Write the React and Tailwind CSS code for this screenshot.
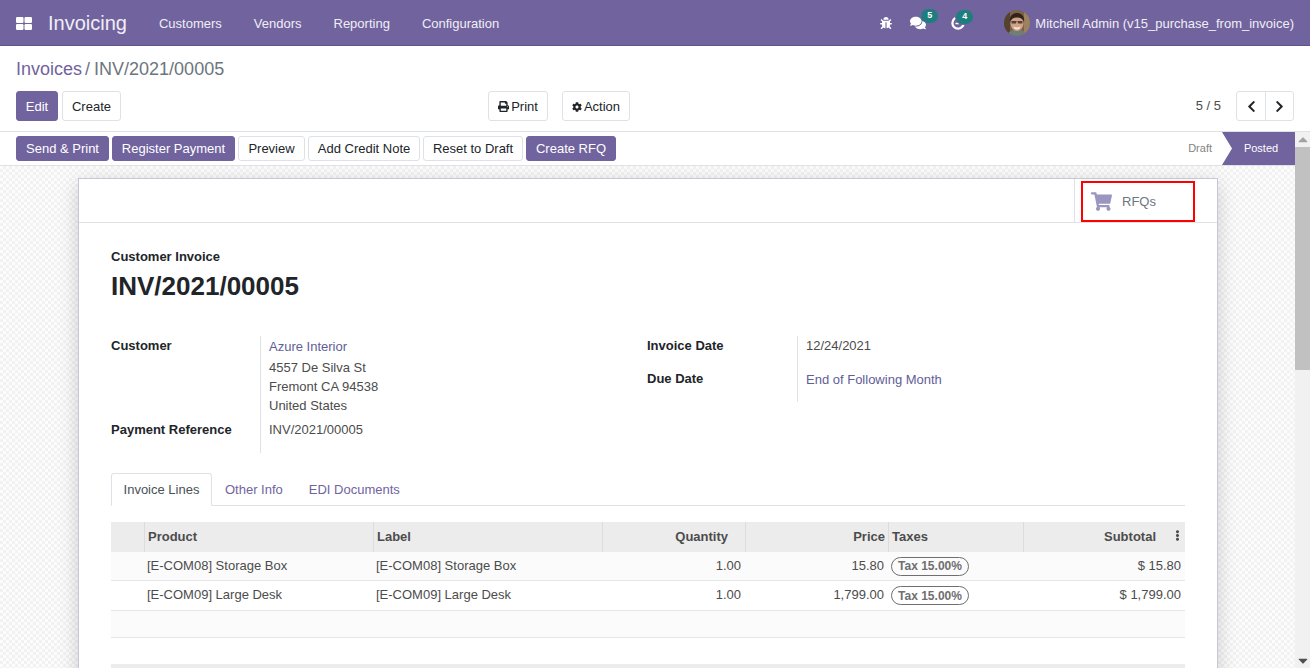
import { FaBug, FaCaretDown, FaCaretUp, FaChevronLeft, FaChevronRight, FaCog, FaComments, FaEllipsisV, FaPrint, FaShoppingCart } from 'react-icons/fa';

const purple = 'bg-[#71639e] border-[#71639e] text-white';
const plain = 'bg-white border-[#dee2e6] text-[#212529]';

function Btn({ primary, className = '', children }) {
  return (
    <button
      type="button"
      className={`inline-flex items-center justify-center rounded-[3px] border text-[13px] ${primary ? purple : plain} ${className}`}
    >
      {children}
    </button>
  );
}

function Badge({ className = '', children }) {
  return (
    <span className={`absolute -top-[6px] flex h-[14px] w-[17px] items-center justify-center rounded-full bg-[#1f7d80] text-[9px] font-bold text-white ${className}`}>
      {children}
    </span>
  );
}

function AppsIcon() {
  return (
    <svg viewBox="0 0 16 13" className="h-[13px] w-[16px] fill-white">
      <rect x="0" y="0" width="7.500" height="6" rx="1.200" />
      <rect x="8.500" y="0" width="7.500" height="6" rx="1.200" />
      <rect x="0" y="7" width="7.500" height="6" rx="1.200" />
      <rect x="8.500" y="7" width="7.500" height="6" rx="1.200" />
    </svg>
  );
}

function ClockIcon() {
  return (
    <svg viewBox="0 0 14 14" className="h-[14px] w-[14px] fill-none stroke-white">
      <circle cx="7" cy="7" r="5.600" strokeWidth="2.300" />
      <path d="M7.500 4v3.500H4.500" strokeWidth="1.300" />
    </svg>
  );
}

function Avatar() {
  return (
    <svg viewBox="0 0 26 26" className="h-[26px] w-[26px] rounded-full">
      <rect width="26" height="26" fill="#7d6247" />
      <rect x="0" y="0" width="6" height="26" fill="#54412f" />
      <rect x="20" y="0" width="6" height="26" fill="#9c8260" />
      <path d="M3 26c1-5 5-6 10-6s9 1 10 6z" fill="#6f7f78" />
      <ellipse cx="13" cy="13.500" rx="6.500" ry="7.500" fill="#d2a084" />
      <path d="M6 12c-1-6 3-9 7-9s8 3 7 9c-1-3-3-4.500-7-4.500s-6 1.500-7 4.500z" fill="#2f241d" />
      <path d="M7.500 11h4.500v2.500h-4.500zM14 11h4.500v2.500h-4.500zM12 11.500h2v.7h-2z" fill="#3a3230" opacity="0.85" />
      <path d="M9.500 16.500c2 1.300 5 1.300 7 0-.5 2.300-1.800 3-3.500 3s-3-.7-3.500-3z" fill="#f4ebe2" />
    </svg>
  );
}

const navLinks = ['Customers', 'Vendors', 'Reporting', 'Configuration'];

function Navbar() {
  return (
    <header className="flex h-[46px] shrink-0 items-center border-b border-[#5f5387] bg-[#71639e] text-[#f0eef5]">
      <span className="ml-[16px] flex pt-[1px]">
        <AppsIcon />
      </span>
      <span className="ml-[16px] text-[20px] text-[#f0eef5]">Invoicing</span>
      <nav className="ml-[32px] flex gap-[32px] pt-[2px] text-[13px]">
        {navLinks.map((l) => (
          <a key={l}>{l}</a>
        ))}
      </nav>
      <div className="ml-auto flex items-center">
        <FaBug className="text-[12px] text-white" />
        <span className="relative ml-[18px] flex">
          <FaComments className="text-[16px] text-white" />
          <Badge className="-right-[12px]">5</Badge>
        </span>
        <span className="relative ml-[25px] flex">
          <ClockIcon />
          <Badge className="-right-[8px] ring-1 ring-[#71639e]">4</Badge>
        </span>
        <span className="ml-[39px] flex items-center">
          <Avatar />
        </span>
        <span className="ml-[5px] mr-[16px] pt-[2px] text-[13px]">Mitchell Admin (v15_purchase_from_invoice)</span>
      </div>
    </header>
  );
}

function ControlPanel() {
  return (
    <div className="h-[86px] shrink-0 border-b border-[#dee2e6] bg-white px-[16px]">
      <div className="flex h-[45px] items-center pt-[1px] text-[18px] text-[#71639e]">
        Invoices
        <span className="ml-[3px] text-[#6c757d]">/</span>
        <span className="ml-[4px] text-[#6c757d]">INV/2021/00005</span>
      </div>
      <div className="relative flex items-center">
        <Btn primary className="h-[30px] w-[42px] pt-[1px]">Edit</Btn>
        <Btn className="ml-[4px] h-[30px] w-[59px] pt-[1px]">Create</Btn>
        <Btn className="ml-[367px] h-[30px] w-[60px] gap-[2px] pt-[1px]">
          <FaPrint className="text-[11px]" /> Print
        </Btn>
        <Btn className="ml-[14px] h-[30px] w-[68px] gap-[2px] pt-[1px]">
          <FaCog className="text-[10px]" /> Action
        </Btn>
        <span className="ml-auto text-[13px] text-[#4c4c4c]">5 / 5</span>
        <div className="ml-[15px] flex h-[30px] rounded-[3px] border border-[#dee2e6]">
          <span className="flex w-[29px] items-center justify-center border-r border-[#dee2e6] text-[13px] text-[#212529]">
            <FaChevronLeft />
          </span>
          <span className="flex w-[27px] items-center justify-center text-[13px] text-[#212529]">
            <FaChevronRight />
          </span>
        </div>
      </div>
    </div>
  );
}

function StatusBar() {
  return (
    <div className="flex h-[34px] shrink-0 items-center border-b border-[#dee2e6] bg-white pl-[16px]">
      <div className="flex gap-[3px]">
        <Btn primary className="h-[25px] w-[93px]">Send &amp; Print</Btn>
        <Btn primary className="h-[25px] w-[123px]">Register Payment</Btn>
        <Btn className="h-[25px] w-[67px]">Preview</Btn>
        <Btn className="h-[25px] w-[112px]">Add Credit Note</Btn>
        <Btn className="h-[25px] w-[100px]">Reset to Draft</Btn>
        <Btn primary className="h-[25px] w-[90px]">Create RFQ</Btn>
      </div>
      <div className="ml-auto flex h-[33px] items-center">
        <span className="mr-[10px] text-[11px] text-[#7f8580]">Draft</span>
        <span className="flex h-[33px] w-[73px] items-center justify-center bg-[#71639e] pl-[5px] text-[11px] text-white [clip-path:polygon(0_0,100%_0,100%_100%,0_100%,10px_50%)]">
          Posted
        </span>
      </div>
    </div>
  );
}

function Field({ label, labelClass = 'w-[149px]', children }) {
  return (
    <div className="flex">
      <div className={`shrink-0 text-[13px] font-bold leading-[20px] text-[#212529] ${labelClass}`}>{label}</div>
      <div className="flex-1 border-l border-[#dee2e6] pl-[8px] text-[13px] text-[#4c4c4c]">{children}</div>
    </div>
  );
}

function FormHeader() {
  return (
    <div className="grid grid-cols-2">
      <div>
        <Field label="Customer">
          <div className="pt-[1px] leading-[19px]">
            <div className="mb-[2px] text-[#5f5e97]">Azure Interior</div>
            <div>4557 De Silva St</div>
            <div>Fremont CA 94538</div>
            <div>United States</div>
          </div>
        </Field>
        <Field label="Payment Reference" labelClass="w-[149px] pt-[5px]">
          <div className="h-[38px] pt-[5px] leading-[20px]">INV/2021/00005</div>
        </Field>
      </div>
      <div className="-ml-[1px]">
        <Field label="Invoice Date" labelClass="w-[150px]">
          <div className="h-[33px] leading-[20px]">12/24/2021</div>
        </Field>
        <Field label="Due Date" labelClass="w-[150px]">
          <div className="h-[33px] pt-[1px] leading-[20px] text-[#5f5e97]">End of Following Month</div>
        </Field>
      </div>
    </div>
  );
}

function Tabs() {
  return (
    <div className="mt-[20px] flex h-[33px] border-b border-[#dee2e6] text-[13px]">
      <span className="flex h-[33px] w-[101px] items-center justify-center rounded-t-[3px] border border-b-white border-[#dee2e6] bg-white text-[#495057]">
        Invoice Lines
      </span>
      <span className="ml-[13px] flex items-center pt-[1px] text-[#71639e]">Other Info</span>
      <span className="ml-[26px] flex items-center pt-[1px] text-[#71639e]">EDI Documents</span>
    </div>
  );
}

const lines = [
  { name: '[E-COM08] Storage Box', qty: '1.00', price: '15.80', total: '$ 15.80', rowClass: 'h-[29px] bg-[#fbfbfb]', textClass: '' },
  { name: '[E-COM09] Large Desk', qty: '1.00', price: '1,799.00', total: '$ 1,799.00', rowClass: 'h-[30px] bg-white', textClass: 'pb-[1px]' },
];

const cols = 'grid grid-cols-[33px_229px_229px_143px_143px_135px_162px] text-[13px]';

function LinesTable() {
  return (
    <div className="mt-[16px]">
      <div className={`${cols} h-[30px] items-stretch bg-[#ececec] font-bold text-[#4c4c4c]`}>
        <span />
        <span className="flex items-center border-l border-[#dcdcdc] pl-[3px]">Product</span>
        <span className="flex items-center border-l border-[#dcdcdc] pl-[3px]">Label</span>
        <span className="flex items-center justify-end border-l border-[#dcdcdc] pr-[17px]">Quantity</span>
        <span className="flex items-center justify-end border-l border-[#dcdcdc] pr-[3px]">Price</span>
        <span className="flex items-center border-l border-[#dcdcdc] pl-[3px]">Taxes</span>
        <span className="relative flex items-center justify-end border-l border-[#dcdcdc] pr-[29px]">
          Subtotal
          <FaEllipsisV className="absolute right-[2px] top-[8px] text-[11px] text-[#4c4c4c]" />
        </span>
      </div>
      {lines.map((l) => (
        <div key={l.name} className={`${cols} items-center border-b border-[#e6e6e6] text-[#4c4c4c] ${l.rowClass}`}>
          <span />
          <span className={`pl-[3px] ${l.textClass}`}>{l.name}</span>
          <span className={`pl-[3px] ${l.textClass}`}>{l.name}</span>
          <span className={`pr-[4px] text-right ${l.textClass}`}>{l.qty}</span>
          <span className={`pr-[4px] text-right ${l.textClass}`}>{l.price}</span>
          <span className="flex pl-[3px]">
            <span className="inline-flex h-[19px] w-[78px] items-center justify-center rounded-full border border-[#6f6f6f] text-[12px] font-bold leading-none text-[#6f6f6f]">
              Tax 15.00%
            </span>
          </span>
          <span className={`pr-[4px] text-right ${l.textClass}`}>{l.total}</span>
        </div>
      ))}
      <div className="h-[27px] border-b border-[#e6e6e6] bg-[#fbfbfb]" />
      <div className="mt-[26px] h-[6px] bg-[#ececec]" />
    </div>
  );
}

function Sheet() {
  return (
    <div className="ml-[78px] h-[540px] w-[1140px] border border-[#c9c6d6] bg-white shadow-[0_5px_20px_-1px_rgba(0,0,0,0.2)]">
      <div className="flex h-[44px] justify-end border-b border-[#dee2e6]">
        <div className="h-[43px] w-[143px] border-l border-[#dee2e6] pl-[6px] pt-[2px]">
          <div className="flex h-[41px] w-[114px] items-center border-2 border-[#ff0000] pl-[8px]">
            <FaShoppingCart className="text-[21px] text-[#9a96c0]" />
            <span className="ml-[10px] text-[13px] text-[#6c757d]">RFQs</span>
          </div>
        </div>
      </div>
      <div className="px-[32px] pt-[26px]">
        <div className="text-[13px] font-bold leading-[16px] text-[#212529]">Customer Invoice</div>
        <h1 className="mt-[5px] text-[26px] font-bold leading-[32px] text-[#212529]">INV/2021/00005</h1>
        <div className="mt-[34px]">
          <FormHeader />
        </div>
        <Tabs />
        <LinesTable />
      </div>
    </div>
  );
}

function Scrollbar() {
  return (
    <div className="flex w-[15px] shrink-0 flex-col items-center bg-[#f1f1f1] text-[#505050]">
      <FaCaretUp className="h-[15px] text-[10px] text-[#a3a3a3]" />
      <div className="h-[223px] w-[15px] bg-[#c1c1c1]" />
      <FaCaretDown className="mt-auto h-[15px] text-[10px]" />
    </div>
  );
}

export default function App() {
  return (
    <div className="flex h-[668px] w-[1310px] flex-col overflow-hidden font-['Liberation_Sans',Arial,sans-serif]">
      <Navbar />
      <ControlPanel />
      <div className="flex min-h-0 flex-1">
        <div className="flex min-w-0 flex-1 flex-col">
          <StatusBar />
          <div className="min-h-0 flex-1 overflow-hidden bg-[repeating-conic-gradient(#f2f2f2_0%_25%,#fcfcfc_0%_50%)] bg-[length:6px_6px] pt-[12px]">
            <Sheet />
          </div>
        </div>
        <Scrollbar />
      </div>
    </div>
  );
}
